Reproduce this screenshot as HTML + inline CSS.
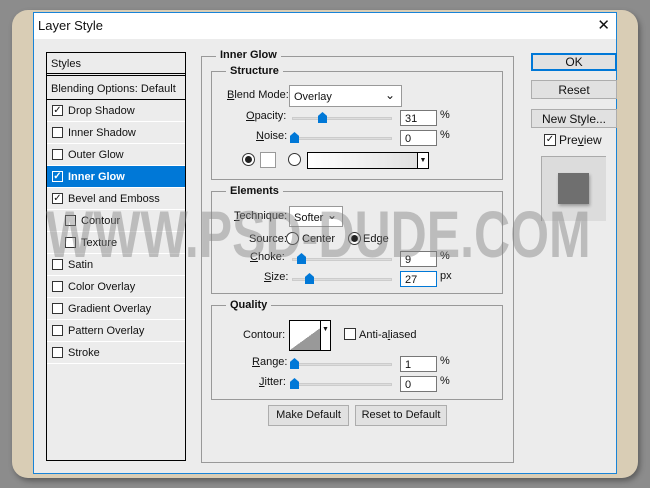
<!DOCTYPE html>
<html><head><style>
*{margin:0;padding:0;box-sizing:border-box}
body{width:650px;height:488px;background:#8c8c8c;position:relative;overflow:hidden;font-family:"Liberation Sans",sans-serif;font-size:11px;color:#111}
.paper{position:absolute;left:12px;top:10px;width:626px;height:468px;border-radius:16px;background:#d9cdb5;box-shadow:2px 3px 6px rgba(0,0,0,.35)}
.dlg{position:absolute;left:33px;top:12px;width:584px;height:462px;background:#ececec;border:1px solid #1883d7}
.title{position:absolute;left:0;top:0;width:582px;height:26px;background:#fff;font-size:13px;padding:5px 0 0 4px}
.x{position:absolute;right:6px;top:3px;font-size:15px}
.a{position:absolute}
.lp{position:absolute;left:12px;top:39px;width:140px;height:409px;border:1px solid #000;background:#ececec}
.row{position:absolute;left:0;width:138px;height:22px;border-bottom:1px solid #fff;padding:5px 0 0 21px}
.cb{position:absolute;left:5px;top:5px;width:11px;height:11px;border:1px solid #333;background:#fff;font-size:10px;line-height:9px;text-align:center}
.sel{background:#0078d7;color:#fff;font-weight:bold}
fieldset{position:absolute;border:1px solid #999;}
.lg{position:absolute;background:#ececec;font-weight:bold;padding:0 4px}
.inp{position:absolute;width:37px;height:16px;border:1px solid #777;background:#fff;padding:2px 0 0 4px}
.trk{position:absolute;height:3px;background:#ddd;border:1px solid #ccc;width:100px}
.th{position:absolute;width:9px;height:11px;background:#0078d7;clip-path:polygon(50% 0,100% 35%,100% 100%,0 100%,0 35%)}
.btn{position:absolute;background:#e1e1e1;border:1px solid #adadad;text-align:center;font-size:12px}
.rad{position:absolute;width:13px;height:13px;border-radius:50%;border:1px solid #333;background:#fff}
.rad.on::after{content:"";position:absolute;left:2px;top:2px;width:7px;height:7px;border-radius:50%;background:#222}
.wm{position:absolute;left:46px;top:196px;font-size:66px;font-weight:bold;color:rgba(130,130,130,.45);transform:scaleX(.758);transform-origin:0 0;white-space:nowrap;letter-spacing:0}
</style></head><body>
<div class="paper"></div>
<div class="dlg">
<div class="title">Layer Style<span class="x">✕</span></div>
<div class="lp">
<div class="row" style="top:0;height:23px;padding-left:4px;border-bottom:3px double #000">Styles</div>
<div class="row" style="top:25px;height:22px;padding-left:4px;border-bottom:1px solid #000">Blending Options: Default</div>
<div class="row" style="top:47px"><span class="cb">✓</span>Drop Shadow</div>
<div class="row" style="top:69px"><span class="cb"></span>Inner Shadow</div>
<div class="row" style="top:91px"><span class="cb"></span>Outer Glow</div>
<div class="row sel" style="top:113px"><span class="cb" style="border-color:#fff;background:#0078d7;color:#fff">✓</span>Inner Glow</div>
<div class="row" style="top:135px"><span class="cb">✓</span>Bevel and Emboss</div>
<div class="row" style="top:157px;padding-left:34px"><span class="cb" style="left:18px"></span>Contour</div>
<div class="row" style="top:179px;padding-left:34px"><span class="cb" style="left:18px"></span>Texture</div>
<div class="row" style="top:201px"><span class="cb"></span>Satin</div>
<div class="row" style="top:223px"><span class="cb"></span>Color Overlay</div>
<div class="row" style="top:245px"><span class="cb"></span>Gradient Overlay</div>
<div class="row" style="top:267px"><span class="cb"></span>Pattern Overlay</div>
<div class="row" style="top:289px"><span class="cb"></span>Stroke</div>
</div>
<fieldset style="left:167px;top:43px;width:313px;height:407px"></fieldset>
<div class="lg" style="left:182px;top:36px">Inner Glow</div>
<fieldset style="left:177px;top:58px;width:292px;height:109px"></fieldset>
<div class="lg" style="left:192px;top:52px">Structure</div>
<div class="a" style="left:193px;top:76px"><u>B</u>lend Mode:</div>
<div class="a" style="left:255px;top:72px;width:113px;height:22px;border:1px solid #999;background:#fff;padding:5px 0 0 4px">Overlay<span style="position:absolute;right:6px;top:2px;font-size:12px">⌄</span></div>
<div class="a" style="left:212px;top:97px"><u>O</u>pacity:</div>
<div class="trk" style="left:258px;top:104px"></div><div class="th" style="left:284px;top:99px"></div>
<div class="inp" style="left:366px;top:97px">31</div><div class="a" style="left:406px;top:96px">%</div>
<div class="a" style="left:222px;top:117px"><u>N</u>oise:</div>
<div class="trk" style="left:258px;top:124px"></div><div class="th" style="left:256px;top:119px"></div>
<div class="inp" style="left:366px;top:117px">0</div><div class="a" style="left:406px;top:116px">%</div>
<div class="rad on" style="left:208px;top:140px"></div>
<div class="a" style="left:226px;top:139px;width:16px;height:16px;border:1px solid #999;background:#fff"></div>
<div class="rad" style="left:254px;top:140px"></div>
<div class="a" style="left:273px;top:139px;width:122px;height:17px;border:1px solid #000;background:linear-gradient(90deg,#fff,#ddd)"><span style="position:absolute;right:0;top:0;width:11px;height:15px;border-left:1px solid #000;background:#fff;font-size:7px;text-align:center;line-height:15px">▼</span></div>
<fieldset style="left:177px;top:178px;width:292px;height:103px"></fieldset>
<div class="lg" style="left:192px;top:172px">Elements</div>
<div class="a" style="left:200px;top:197px"><u>T</u>echnique:</div>
<div class="a" style="left:255px;top:193px;width:54px;height:21px;border:1px solid #999;background:#fff;padding:5px 0 0 4px">Softer<span style="position:absolute;right:5px;top:1px;font-size:12px">⌄</span></div>
<div class="a" style="left:215px;top:220px">Source:</div>
<div class="rad" style="left:252px;top:219px"></div><div class="a" style="left:268px;top:220px">Center</div>
<div class="rad on" style="left:314px;top:219px"></div><div class="a" style="left:329px;top:220px">Edge</div>
<div class="a" style="left:216px;top:238px"><u>C</u>hoke:</div>
<div class="trk" style="left:258px;top:245px"></div><div class="th" style="left:263px;top:240px"></div>
<div class="inp" style="left:366px;top:238px">9</div><div class="a" style="left:406px;top:237px">%</div>
<div class="a" style="left:230px;top:258px"><u>S</u>ize:</div>
<div class="trk" style="left:258px;top:265px"></div><div class="th" style="left:271px;top:260px"></div>
<div class="inp" style="left:366px;top:258px;border-color:#0078d7">27</div><div class="a" style="left:406px;top:257px">px</div>
<fieldset style="left:177px;top:292px;width:292px;height:95px"></fieldset>
<div class="lg" style="left:192px;top:286px">Quality</div>
<div class="a" style="left:209px;top:316px">Contour:</div>
<div class="a" style="left:255px;top:307px;width:42px;height:31px;border:1px solid #000;background:linear-gradient(to top left,#999 50%,#fff 50%)"><span style="position:absolute;right:0;top:0;width:10px;height:29px;border-left:1px solid #000;background:#fff;font-size:7px;text-align:center;line-height:18px">▼</span></div>
<div class="a" style="left:310px;top:315px;width:12px;height:12px;border:1px solid #333;background:#fff"></div>
<div class="a" style="left:325px;top:316px">Anti-a<u>l</u>iased</div>
<div class="a" style="left:218px;top:343px"><u>R</u>ange:</div>
<div class="trk" style="left:258px;top:350px"></div><div class="th" style="left:256px;top:345px"></div>
<div class="inp" style="left:366px;top:343px">1</div><div class="a" style="left:406px;top:342px">%</div>
<div class="a" style="left:225px;top:363px"><u>J</u>itter:</div>
<div class="trk" style="left:258px;top:370px"></div><div class="th" style="left:256px;top:365px"></div>
<div class="inp" style="left:366px;top:363px">0</div><div class="a" style="left:406px;top:362px">%</div>
<div class="btn" style="left:234px;top:392px;width:81px;height:21px;padding-top:3px;font-size:11px">Make Default</div>
<div class="btn" style="left:321px;top:392px;width:92px;height:21px;padding-top:3px;font-size:11px">Reset to Default</div>
<div class="btn" style="left:497px;top:40px;width:86px;height:18px;border:2px solid #0078d7;padding-top:0px">OK</div>
<div class="btn" style="left:497px;top:67px;width:86px;height:19px;padding-top:2px">Reset</div>
<div class="btn" style="left:497px;top:96px;width:86px;height:19px;padding-top:2px">New Style...</div>
<div class="a" style="left:510px;top:121px;width:12px;height:12px;border:1px solid #333;background:#fff;font-size:10px;line-height:10px;text-align:center">✓</div>
<div class="a" style="left:525px;top:120px;font-size:12px">Pre<u>v</u>iew</div>
<div class="a" style="left:507px;top:143px;width:65px;height:65px;background:#dcdcdc;border-top:1px solid #aaa;border-left:1px solid #aaa"></div>
<div class="a" style="left:524px;top:160px;width:31px;height:31px;background:#6f6f6f;box-shadow:1px 2px 3px rgba(0,0,0,.3)"></div>
</div>
<div class="wm">WWW.PSD-DUDE.COM</div>
</body></html>
